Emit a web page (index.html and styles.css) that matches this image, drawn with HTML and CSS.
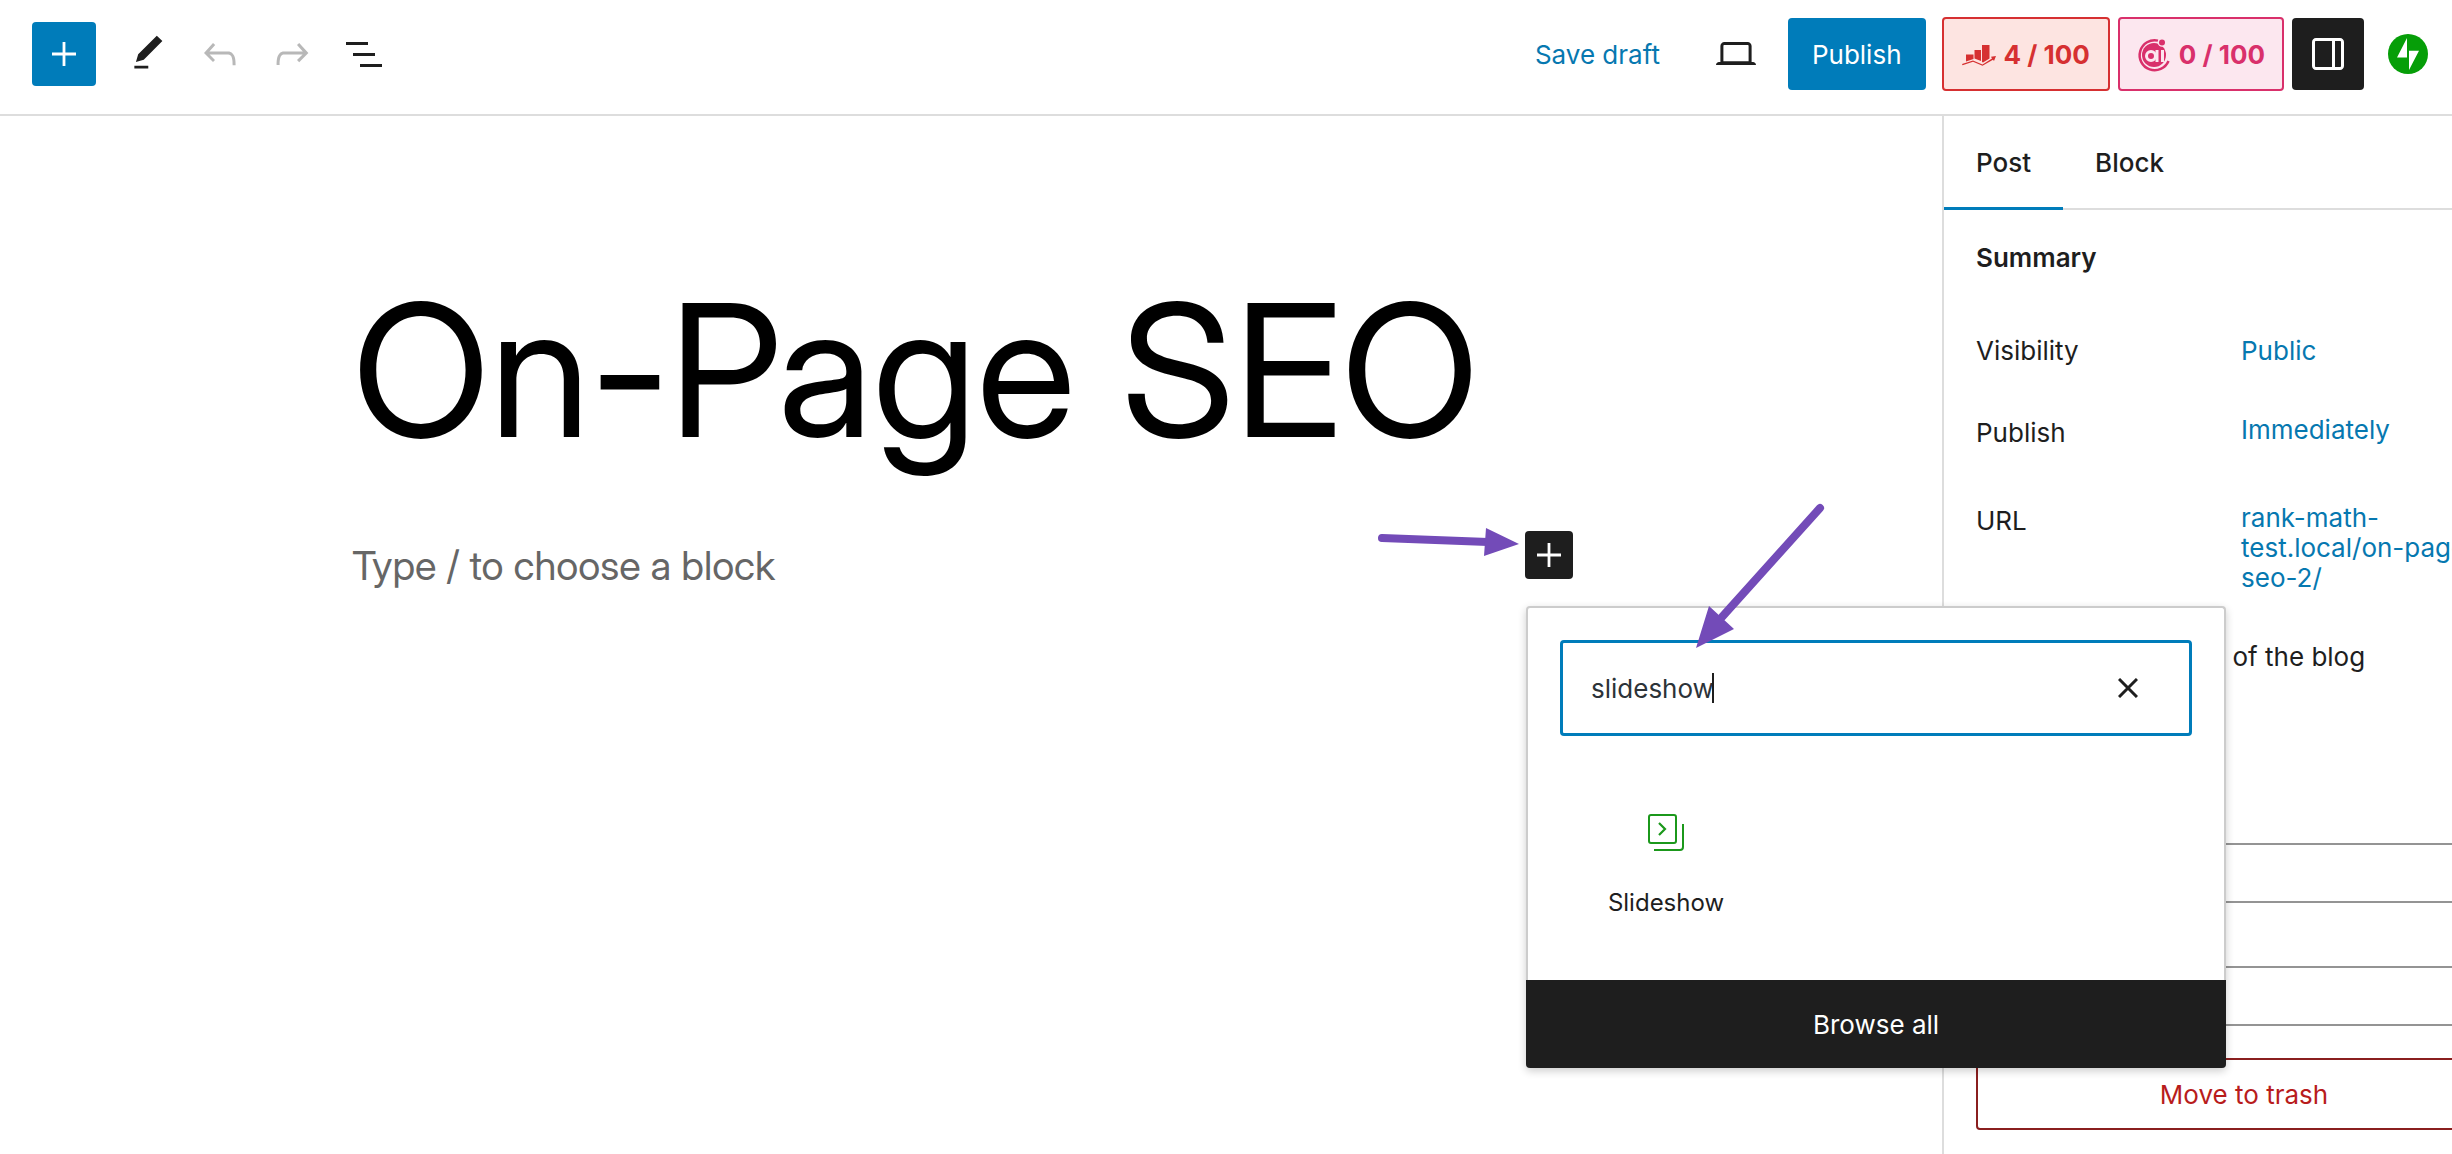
FILE: index.html
```html
<!DOCTYPE html>
<html lang="en">
<head>
<meta charset="utf-8">
<title>On-Page SEO – Edit post</title>
<link rel="stylesheet" href="styles.css">
</head>
<body>
<div class="editor">
  <header class="toolbar">
    <div class="tools">
      <button class="tool tool-primary" type="button" aria-label="Toggle block inserter">
        <svg width="48" height="48" viewBox="0 0 24 24" fill="currentColor"><path d="M11.300 6h1.400v5.300H18v1.400h-5.300V18h-1.400v-5.300H6v-1.400h5.300z"/></svg>
      </button>
      <button class="tool" type="button" aria-label="Tools">
        <svg width="48" height="48" viewBox="0 0 24 24" fill="currentColor"><path d="M20.1 5.1L16.9 2 6.2 12.700l-1.300 4.400 4.500-1.300L20.100 5.100zM4 20.800h8v-1.500H4v1.500z" transform="translate(1.700 1.100) scale(.87)"/></svg>
      </button>
      <button class="tool tool-muted" type="button" aria-label="Undo">
        <svg width="48" height="48" viewBox="0 0 24 24" fill="currentColor"><path d="M18.3 11.700c-.6-.6-1.400-.9-2.300-.9H6.700l2.900-3.300-1.100-1-4.500 5L8.500 16l1-1-2.700-2.700H16c.5 0 .9.2 1.300.5 1 1 1 3.400 1 4.500v.3h1.500v-.2c0-1.500 0-4.300-1.500-5.700z"/></svg>
      </button>
      <button class="tool tool-muted" type="button" aria-label="Redo">
        <svg width="48" height="48" viewBox="0 0 24 24" fill="currentColor"><path d="M15.600 6.500l-1.100 1 2.900 3.300H8c-.9 0-1.700.3-2.300.9-1.400 1.500-1.400 4.200-1.400 5.600v.2h1.500v-.3c0-1.100 0-3.500 1-4.500.3-.3.7-.5 1.300-.5h9.200L14.500 15l1.100 1.100 4.600-4.600-4.600-5z"/></svg>
      </button>
      <button class="tool" type="button" aria-label="Document overview">
        <svg width="48" height="48" viewBox="0 0 24 24" fill="currentColor"><path d="M3 6h11v1.500H3V6zm3.500 5.500h11V13h-11v-1.500zM21 17H10v1.500h11V17z"/></svg>
      </button>
    </div>
    <div class="actions">
      <button class="save" type="button">Save draft</button>
      <button class="icon-btn preview" type="button" aria-label="Preview">
        <svg width="48" height="48" viewBox="0 0 24 24" fill="currentColor"><path d="M20.500 16h-.7V8c0-1.100-.9-2-2-2H6.200c-1.100 0-2 .9-2 2v8h-.7c-.8 0-1.500.7-1.500 1.500h20c0-.8-.7-1.500-1.500-1.500zM5.700 8c0-.3.2-.5.500-.5h11.600c.3 0 .5.2.5.5v7.600H5.700V8z"/></svg>
      </button>
      <button class="publish" type="button">Publish</button>
      <button class="score score-seo" type="button">
        <svg width="34" height="22" viewBox="0 0 34 22" fill="currentColor"><path d="M4 10.500h7.500v4.500l-7.500 2.500zM12.500 6H19v11l-6.500-2.500zM20 1h7.500v13.500l-6.500 4-1-.5z"/><path d="M0 20l11-3.500 9.500 4 9.500-6-1-1.700 5-.8-2 5-1-1.200-10.500 6-9.500-4-10.500 3.500z"/></svg>
        4 / 100
      </button>
      <button class="score score-ai" type="button">
        <svg width="34" height="36" viewBox="0 0 34 36" fill="none" stroke="currentColor"><path d="M21 3.600A15 15 0 1 0 31.500 24" stroke-width="2.500"/><circle cx="17" cy="18" r="12" fill="currentColor" stroke="none"/><circle cx="25" cy="5.500" r="4.300" fill="#fce7ef" stroke="none"/><circle cx="25" cy="5.500" r="3" fill="currentColor" stroke="none"/><circle cx="14" cy="19" r="4.500" stroke="#fce7ef" stroke-width="3"/><path d="M20 13v12M25.500 13v12" stroke="#fce7ef" stroke-width="3"/></svg>
        0 / 100
      </button>
      <button class="icon-btn settings" type="button" aria-label="Settings">
        <svg width="48" height="48" viewBox="0 0 24 24" fill="currentColor"><path d="M18 4H6c-1.100 0-2 .9-2 2v12c0 1.100.9 2 2 2h12c1.100 0 2-.9 2-2V6c0-1.100-.9-2-2-2zm-4 14.500H6c-.3 0-.5-.2-.5-.5V6c0-.3.2-.5.500-.5h8v13zm4.500-.5c0 .3-.2.500-.5.500h-2.500v-13H18c.3 0 .5.2.5.500v12z"/></svg>
      </button>
      <button class="icon-btn" type="button" aria-label="Jetpack">
        <svg width="40" height="40" viewBox="0 0 32 32"><path fill="#069e08" d="M16 0a16 16 0 1 0 0 32 16 16 0 0 0 0-32z"/><path fill="#fff" d="M15.200 18.700h-8l8-15.500zM16.800 28.800V13.300h8z"/></svg>
      </button>
    </div>
  </header>
  <div class="body">
    <main class="canvas">
      <h1 class="title">On-Page SEO</h1>
      <div class="block">
        <p class="placeholder">Type / to choose a block</p>
        <div class="inserter">
          <button class="inserter-toggle" type="button" aria-label="Add block">
            <svg width="48" height="48" viewBox="0 0 24 24" fill="currentColor"><path d="M11.300 6h1.400v5.300H18v1.400h-5.300V18h-1.400v-5.300H6v-1.400h5.300z"/></svg>
          </button>
          <div class="popover">
            <div class="search">
              <input class="search-input" type="text" value="slideshow" aria-label="Search for blocks">
              <button class="search-clear" type="button" aria-label="Reset search">
                <svg width="20" height="20" viewBox="0 0 20 20" fill="none" stroke="currentColor" stroke-width="3"><path d="M1 1l18 18M19 1L1 19"/></svg>
              </button>
              <span class="caret"></span>
            </div>
            <button class="result" type="button">
              <svg width="38" height="38" viewBox="0 0 38 38" fill="none" stroke="#1b981b" stroke-width="2"><rect x="2" y="1" width="27" height="28" rx="2"/><path d="M12 9l6 6-6 6" stroke-width="2.200"/><path d="M36 10v23q0 3-3 3H7"/></svg>
              Slideshow
            </button>
            <button class="browse" type="button">Browse all</button>
          </div>
        </div>
      </div>
      <svg class="arrows" width="460" height="160" viewBox="0 0 460 160" fill="#734bb8" stroke="#734bb8"><g stroke-width="8" stroke-linecap="round"><path d="M12 38l106 4M450 8L352 117"/></g><g stroke="none"><path d="M116 28l33 16-35 12zM339 106l25 23-38 19z"/></g></svg>
    </main>
    <aside class="sidebar">
      <div class="panel">
        <div class="tabs">
          <button class="tab tab-active" type="button">Post</button>
          <button class="tab" type="button">Block</button>
        </div>
        <div class="settings-body">
          <h2 class="heading">Summary</h2>
          <div class="row"><span>Visibility</span><a class="value" href="#">Public</a></div>
          <div class="row row-schedule"><span>Publish</span><a class="value" href="#">Immediately</a></div>
          <div class="row row-url"><span>URL</span><a class="value" href="#">rank-math-test.local/on-page-seo-2/</a></div>
          <label class="check"><input type="checkbox"><span>Stick to the top of the blog</span></label>
          <select class="field" aria-label="Author"><option></option></select>
          <select class="field" aria-label="Format"><option></option></select>
          <button class="trash" type="button">Move to trash</button>
        </div>
      </div>
    </aside>
  </div>
</div>
</body>
</html>
```
FILE: styles.css
```css
* { box-sizing: border-box; }

body {
  margin: 0;
  background: #fff;
  color: #1e1e1e;
  font: 26px/30px Inter, "Liberation Sans", sans-serif;
}

button, input, select { font: inherit; color: inherit; }

button {
  display: flex;
  align-items: center;
  justify-content: center;
  padding: 0;
  border: 0;
  background: none;
  white-space: nowrap;
}

a { color: #0678b0; text-decoration: none; }

.editor {
  display: flex;
  flex-direction: column;
  min-height: 100vh;
  overflow: hidden;
}

/* Top toolbar */
.toolbar {
  display: flex;
  align-items: center;
  justify-content: space-between;
  height: 116px;
  padding: 0 8px 6px 32px;
  border-bottom: 2px solid #ddd;
}

.tools { display: flex; gap: 8px; }
.tool { width: 64px; height: 64px; border-radius: 4px; }
.tool-primary { margin-right: 12px; background: #007cba; color: #fff; }
.tool-muted { color: #b8b8b8; }

.actions { display: flex; align-items: center; gap: 8px; }
.save { margin-right: 32px; padding-top: 2px; color: #0678b0; }
.icon-btn { width: 72px; height: 72px; border-radius: 4px; }
.preview { margin-right: 8px; }
.publish {
  height: 72px;
  margin-right: 8px;
  padding: 2px 24px 0;
  border-radius: 4px;
  background: #007cba;
  color: #fff;
}
.score {
  gap: 8px;
  height: 74px;
  padding: 2px 17px 0;
  border: 2px solid;
  border-radius: 4px;
  font-weight: 700;
}
.score-seo { padding: 2px 18px 0; background: #fde4e1; color: #d63031; }
.score-ai { background: #fce7ef; color: #d9306b; }
.settings { background: #1e1e1e; color: #fff; }

/* Canvas */
.body { display: flex; flex: 1; }
.canvas {
  position: relative;
  flex: 1;
  min-width: 0;
  padding: 138px 369px 0 352px;
  font-family: "Inter Display", Inter, "Liberation Sans", sans-serif;
}
.title {
  margin: 0;
  color: #000;
  font-size: 184px;
  font-weight: 400;
  line-height: 232px;
  white-space: nowrap;
}
.block {
  display: flex;
  justify-content: space-between;
  margin-top: 45px;
}
.placeholder {
  margin: 0;
  color: #666;
  font-size: 40px;
  line-height: 70px;
}
.inserter { position: relative; }
.inserter-toggle {
  width: 48px;
  height: 48px;
  border-radius: 4px;
  background: #1e1e1e;
  color: #fff;
}

/* Block picker */
.popover {
  position: absolute;
  top: 75px;
  left: 1px;
  z-index: 1;
  width: 700px;
  border: 2px solid #ccc;
  border-bottom: 0;
  border-radius: 4px;
  background: #fff;
  box-shadow: 0 3px 8px rgba(0, 0, 0, 0.2);
  font-family: Inter, "Liberation Sans", sans-serif;
}
.search {
  position: relative;
  display: flex;
  height: 96px;
  margin: 32px;
  border: 3px solid #007cba;
  border-radius: 4px;
}
.search-input {
  flex: 1;
  min-width: 0;
  padding: 2px 28px 0;
  border: 0;
  outline: 0;
  background: none;
  color: #2c3338;
}
.search-clear { width: 122px; }
.caret {
  position: absolute;
  top: 30px;
  left: 149px;
  width: 2px;
  height: 30px;
  background: #1e1e1e;
}
.result {
  flex-direction: column;
  gap: 36px;
  width: 208px;
  height: 180px;
  margin: 0 34px 32px;
  padding-top: 16px;
  font-size: 24px;
}
.browse {
  width: 700px;
  height: 88px;
  margin: 0 -2px;
  padding-top: 2px;
  border-radius: 0 0 4px 4px;
  background: #1e1e1e;
  color: #fff;
}
.arrows {
  position: absolute;
  top: 384px;
  left: 1370px;
  z-index: 2;
  pointer-events: none;
}

/* Settings sidebar, wider than the space left for it */
.sidebar {
  flex: 0 0 510px;
  overflow: hidden;
  border-left: 2px solid #ddd;
}
.panel { width: 600px; }
.tabs { display: flex; height: 94px; border-bottom: 2px solid #ddd; }
.tab { height: 94px; padding: 0 32px; font-weight: 500; }
.tab-active { box-shadow: inset 0 -3px #007cba; }
.settings-body { padding: 33px 32px 24px; }
.heading {
  margin: 0 0 63px;
  font-size: 26px;
  font-weight: 600;
  line-height: 30px;
}
.row {
  display: grid;
  grid-template-columns: 265px 1fr;
  margin-bottom: 52px;
}
.row-schedule { align-items: start; margin-bottom: 58px; }
.row-schedule .value, .row-url .value { margin-top: -3px; }
.row-url { margin-bottom: 44px; }
.check {
  display: flex;
  align-items: center;
  gap: 24px;
  height: 40px;
  white-space: nowrap;
}
.check input { width: 40px; height: 40px; margin: 0; }
.field {
  display: block;
  width: 100%;
  height: 60px;
  margin-top: 63px;
  border: 2px solid #949494;
  border-radius: 4px;
  background: #fff;
  appearance: none;
}
.check + .field { margin-top: 166px; }
.trash {
  width: 100%;
  height: 72px;
  margin-top: 32px;
  padding-top: 2px;
  border: 2px solid #8a1f1f;
  border-radius: 4px;
  color: #b81c1c;
}
```
